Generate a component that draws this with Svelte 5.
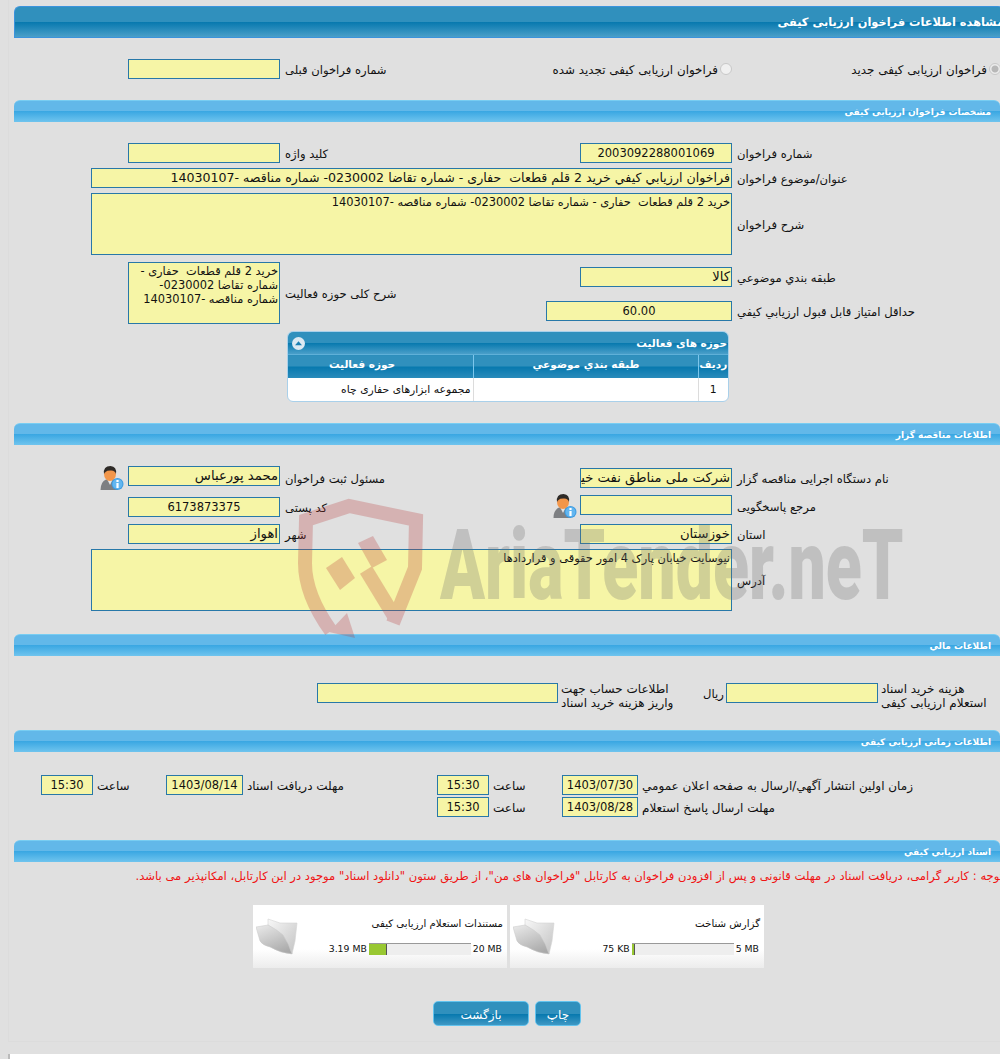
<script>
    const docs = [
        { title: "گزارش شناخت", max: "5 MB", used: "75 KB", pct: 3 },
        { title: "مستندات استعلام ارزیابی کیفی", max: "20 MB", used: "3.19 MB", pct: 18 },
    ];
</script>

{#snippet person()}
    <svg class="person" viewBox="0 0 24 24" width="24" height="24">
        <path d="M0.5 24 Q0.5 16 6 13.5 L14 13.5 Q18 16 18 24 Z" fill="#7d7f82" />
        <path d="M7 13 L10 19 L13 13 Z" fill="#e4e4e4" />
        <ellipse cx="10" cy="8" rx="6" ry="7" fill="#f2964a" />
        <path d="M4 8 Q3 0 10.5 0 Q17 0.5 16 8 Q15 4.2 11 4.4 Q7 4.2 5.8 5.8 Q4.6 6.8 4 8 Z" fill="#2e2a27" />
        <circle cx="17.5" cy="18" r="6" fill="#3d9be0" />
        <circle cx="17.5" cy="18" r="5" fill="#62b6f0" />
        <rect x="16.4" y="17" width="2.2" height="5" fill="#fff" />
        <rect x="16.4" y="14" width="2.2" height="2" fill="#fff" />
    </svg>
{/snippet}

{#snippet folder()}
    <svg class="folder" viewBox="0 0 42 38" width="42" height="38">
        <defs>
            <linearGradient id="fold" x1="0.2" y1="0" x2="0.7" y2="1">
                <stop offset="0" stop-color="#e6e6e6" />
                <stop offset="1" stop-color="#a9a9a9" />
            </linearGradient>
            <linearGradient id="sheet" x1="0" y1="0" x2="1" y2="1">
                <stop offset="0" stop-color="#f8f8f8" />
                <stop offset="1" stop-color="#c2c2c2" />
            </linearGradient>
        </defs>
        <path d="M12 1 L24 5 L41 5 L39 23 L36 36 L27 17 L12 7 Z" fill="url(#sheet)" stroke="#d4d4d4" stroke-width="0.6" />
        <path d="M0 9 L12 7 Q20 11 27 17 Q33 26 36 36 Q24 35 14 29 Q6 27 4 23 Z" fill="url(#fold)" stroke="#c8c8c8" stroke-width="0.5" />
    </svg>
{/snippet}

<div class="page">
    <div class="bar main"><span>مشاهده اطلاعات فراخوان ارزیابی کیفی</span></div>
    <div class="body b1 form">
        <label class="radio r1"><input type="radio" name="kind" checked disabled /> فراخوان ارزیابی کیفی جدید</label>
        <label class="radio r2"><input type="radio" name="kind" disabled /> فراخوان ارزیابی کیفی تجدید شده</label>
        <div class="field left"></div>
        <div class="lbl lcap">شماره فراخوان قبلی</div>
    </div>

    <div class="bar"><span>مشخصات فراخوان ارزیابی کیفی</span></div>
    <div class="body b2">
        <div class="form rows2">
            <div class="field left"></div>
            <div class="lbl lcap">كليد واژه</div>
            <div class="field mid c">2003092288001069</div>
            <div class="lbl rcap">شماره فراخوان</div>

            <div class="field full">فراخوان ارزيابي كيفي خريد 2 قلم قطعات  حفاری - شماره تقاضا 0230002- شماره مناقصه -14030107</div>
            <div class="lbl rcap">عنوان/موضوع فراخوان</div>

            <div class="field full area">خرید 2 قلم قطعات  حفاری - شماره تقاضا 0230002- شماره مناقصه -14030107</div>
            <div class="lbl rcap">شرح فراخوان</div>

            <div class="field left area scope">خرید 2 قلم قطعات  حفاری - شماره تقاضا 0230002- شماره مناقصه -14030107</div>
            <div class="lbl lcap scopecap">شرح كلی حوزه فعالیت</div>
            <div class="field mid cat">کالا</div>
            <div class="lbl rcap cat">طبقه بندي موضوعي</div>
            <div class="field wide c score">60.00</div>
            <div class="lbl rcap score">حداقل امتياز قابل قبول ارزيابي كيفي</div>
        </div>

        <div class="activity">
            <div class="cap">
                <span>حوزه های فعالیت</span>
                <svg viewBox="0 0 12 12" width="13" height="13">
                    <circle cx="6" cy="6" r="6" fill="#dce9f2" />
                    <path d="M2.8 7.6 L6 4 L9.2 7.6 Z" fill="#1a7fb2" />
                </svg>
            </div>
            <table>
                <thead>
                    <tr>
                        <th class="n">ردیف</th>
                        <th class="cls">طبقه بندي موضوعي</th>
                        <th class="act">حوزه فعالیت</th>
                    </tr>
                </thead>
                <tbody>
                    <tr>
                        <td class="n">1</td>
                        <td class="cls"></td>
                        <td>مجموعه ابزارهای حفاری چاه</td>
                    </tr>
                </tbody>
            </table>
        </div>
    </div>

    <div class="bar"><span>اطلاعات مناقصه گزار</span></div>
    <div class="body b3 form">
        <div class="iconcell i1">{@render person()}</div>
        <div class="field left">محمد پورعباس</div>
        <div class="lbl lcap">مسئول ثبت فراخوان</div>
        <div class="field mid org">شرکت ملی مناطق نفت خیز جنوب</div>
        <div class="lbl rcap">نام دستگاه اجرایی مناقصه گزار</div>

        <div class="field left c low">6173873375</div>
        <div class="lbl lcap low">کد پستی</div>
        <div class="iconcell i2">{@render person()}</div>
        <div class="field mid high"></div>
        <div class="lbl rcap">مرجع پاسخگویی</div>

        <div class="field left low">اهواز</div>
        <div class="lbl lcap low">شهر</div>
        <div class="field mid low">خوزستان</div>
        <div class="lbl rcap low">استان</div>

        <div class="field full area">نیوسایت خیابان پارک 4 امور حقوقی و قراردادها</div>
        <div class="lbl rcap">آدرس</div>
    </div>

    <div class="bar"><span>اطلاعات مالي</span></div>
    <div class="body b4">
        <div class="field"></div>
        <div class="lbl two">اطلاعات حساب جهت<br />واریز هزینه خرید اسناد</div>
        <div class="lbl rial">ریال</div>
        <div class="field"></div>
        <div class="lbl two">هزینه خرید اسناد<br />استعلام ارزیابی کیفی</div>
    </div>

    <div class="bar"><span>اطلاعات زمانی ارزیابی کیفی</span></div>
    <div class="body b5">
        <div class="field c">15:30</div>
        <div class="lbl">ساعت</div>
        <div class="field c">1403/08/14</div>
        <div class="lbl">مهلت دریافت اسناد</div>
        <div class="field c">15:30</div>
        <div class="lbl">ساعت</div>
        <div class="field c">1403/07/30</div>
        <div class="lbl">زمان اولین انتشار آگهي/ارسال به صفحه اعلان عمومي</div>

        <div class="field c second">15:30</div>
        <div class="lbl">ساعت</div>
        <div class="field c">1403/08/28</div>
        <div class="lbl">مهلت ارسال پاسخ استعلام</div>
    </div>

    <div class="bar"><span>اسناد ارزیابي كيفي</span></div>
    <div class="body b6">
        <div class="note">توجه : کاربر گرامی، دریافت اسناد در مهلت قانونی و پس از افزودن فراخوان به کارتابل "فراخوان های من"، از طریق ستون "دانلود اسناد" موجود در این کارتابل، امکانپذیر می باشد.</div>
        <div class="cards">
            {#each docs as d}
                <div class="card">
                    <div class="info">
                        <div class="ctitle">{d.title}</div>
                        <div class="usage">
                            <span>{d.max}</span>
                            <div class="track"><div class="fill" style="width: {d.pct}%"></div></div>
                            <span>{d.used}</span>
                        </div>
                    </div>
                    {@render folder()}
                </div>
            {/each}
        </div>
        <div class="actions">
            <button class="back">بازگشت</button>
            <button class="print">چاپ</button>
        </div>
    </div>
</div>
<div class="foot"></div>

<div class="watermark">
    <svg viewBox="0 0 140 145" width="140" height="145">
        <path d="M100 128 L122 73 L123 25 L56 11 L13 25 L12 68 Q12 100 38 136" fill="none" stroke="#b83a3a" stroke-width="14" />
        <path d="M36 137 L62 143 L54 118 Z" fill="#b83a3a" />
        <path d="M33 73 L49 62 L62 83 L47 95 Z" fill="#b83a3a" />
        <path d="M65 48 L80 41 L94 65 L79 73 Z" fill="#b83a3a" />
        <path d="M73 75 L101 121" stroke="#b83a3a" stroke-width="14" fill="none" />
    </svg>
    <span>AriaTender.neT</span>
</div>

<style>
    :global(html),
    :global(body) {
        margin: 0;
        height: 100%;
        overflow: hidden;
        background: #e0e0e0;
    }

    :global(body) {
        font-family: "DejaVu Sans", sans-serif;
        font-size: 11.6px;
        color: #111;
    }

    .page {
        margin-left: 8px;
        padding: 6px 0 15px 5px;
        border-left: 1px solid #dcdcdc;
        border-bottom: 1px solid #dcdcdc;
    }

    .foot {
        margin: 12px 0 0 8px;
        height: 30px;
        background: #fff;
        border-left: 2px solid #bbb;
    }

    /* section bars */
    .bar {
        height: 22px;
        box-sizing: border-box;
        direction: rtl;
        display: flex;
        align-items: center;
        padding-right: 9px;
        color: #fff;
        font-weight: bold;
        font-size: 9px;
        border-top: 1px solid #78cdf2;
        border-radius: 6px 6px 0 0;
        background: linear-gradient(#62b8e9 0, #62b8e9 10px, #38a6e2 10px, #6fc4ee 100%);
    }

    .bar.main {
        height: 32px;
        padding-right: 0;
        margin-right: -4px;
        font-size: 11.4px;
        border-top-color: #3b93dc;
        border-left: 1px solid #3b93dc;
        border-bottom: 1px solid #3b93dc;
        background: linear-gradient(#3090bd 0, #3090bd 15px, #0678ae 15px, #4a9fc9 100%);
    }

    .body {
        direction: ltr;
    }

    /* shared form grid: 91 / 128 / 280 / 546 / 580 / 732 */
    .form {
        display: grid;
        grid-template-columns: 77px 37px 152px 266px 34px 152px 268px;
        row-gap: 5px;
    }

    .field {
        box-sizing: border-box;
        height: 20px;
        line-height: 18px;
        padding: 0 1px;
        direction: rtl;
        text-align: right;
        white-space: pre;
        overflow: hidden;
        font-size: 13.2px;
        background: #f6f5a6;
        border: 1px solid #2878a8;
    }

    .field.c {
        text-align: center;
        font-size: 11.5px;
    }

    .field.full {
        font-size: 12.6px;
    }

    .field.area {
        height: 62px;
        padding-top: 1px;
        white-space: pre-wrap;
        line-height: 14px;
        font-size: 11.4px;
    }

    .left {
        grid-column: 3;
    }

    .mid {
        grid-column: 6;
    }

    .wide {
        grid-column: 5 / 7;
    }

    .full {
        grid-column: 2 / 7;
    }

    .lbl {
        direction: rtl;
        text-align: left;
        white-space: nowrap;
        padding: 2px 0 0 5px;
        align-self: center;
    }

    .lcap {
        grid-column: 4;
    }

    .rcap {
        grid-column: 7;
    }

    .radio {
        display: flex;
        align-items: center;
        gap: 2px;
        direction: rtl;
        white-space: nowrap;
        grid-row: 1;
        font-size: 11.9px;
        padding-top: 2px;
    }

    .r1 {
        grid-column: 7;
        justify-self: end;
        margin-right: -1px;
    }

    .r2 {
        grid-column: 4 / 7;
        justify-self: end;
    }

    .radio input {
        appearance: none;
        width: 12px;
        height: 12px;
        margin: -3px 0 0;
        border-radius: 50%;
        border: 1px solid #c8c8c8;
        background: #f0f0f0;
    }

    .radio input:checked {
        background: radial-gradient(circle, #b8b8b8 0 3px, #ececec 4px);
    }

    .b1 {
        padding: 21px 0;
    }

    .b1 .field,
    .b1 .lbl {
        grid-row: 1;
    }

    .b2 {
        padding: 21px 0;
    }

    .rows2 {
        grid-template-rows: 20px 20px 62px 27px 32px;
    }

    .scope {
        grid-row: 4 / 6;
        margin-top: 2px;
    }

    .scopecap {
        grid-row: 4 / 6;
        margin-top: 2px;
    }

    .field.cat,
    .lbl.cat {
        grid-row: 4;
        align-self: end;
    }

    .lbl.cat {
        line-height: 20px;
        padding-top: 0;
        margin-bottom: -1px;
    }

    .field.score,
    .lbl.score {
        grid-row: 5;
        margin-top: 9px;
        align-self: start;
    }

    .lbl.score {
        line-height: 20px;
        padding-top: 0;
        margin-top: 10px;
    }

    .activity {
        width: 442px;
        height: 71px;
        box-sizing: border-box;
        margin: 7px 0 0 273px;
        direction: rtl;
        background: #fff;
        border: 1px solid #a9d0ea;
        border-radius: 6px;
        overflow: hidden;
    }

    .cap {
        height: 22px;
        display: flex;
        align-items: center;
        justify-content: space-between;
        padding: 0 1px 0 4px;
        color: #fff;
        font-weight: bold;
        font-size: 10.5px;
        background: linear-gradient(#3090bd 0, #3090bd 11px, #0678ae 11px, #4a9fc9 100%);
    }

    table {
        width: 100%;
        border-collapse: collapse;
        table-layout: fixed;
    }

    th {
        height: 23px;
        padding: 0 0 5px;
        box-sizing: border-box;
        color: #fff;
        font-size: 10.5px;
        background: linear-gradient(#3090bd 0, #3090bd 11px, #0678ae 11px, #2b8cbb 100%);
        border-right: 1px solid #7cc6ec;
        border-top: 1px solid #5fb0d8;
    }

    th:first-child,
    td:first-child {
        border-right: none;
    }

    th.cls {
        text-align: left;
        padding-left: 59px;
    }

    th.act {
        text-align: left;
        padding-left: 41px;
    }

    td {
        height: 23px;
        padding: 0 2px;
        font-size: 10.8px;
        border-right: 1px solid #dcdcdc;
    }

    .n {
        width: 30px;
        text-align: center;
    }

    .cls {
        width: 225px;
    }

    .b3 {
        padding: 21px 0 23px;
        grid-template-rows: 24px 22px 22px 62px;
    }

    .b3 .field.left:not(.low),
    .b3 .field.high {
        align-self: start;
    }

    .field.org {
        margin-top: 2px;
        height: 20px;
    }

    .low {
        align-self: end;
    }

    .lbl.low {
        margin-bottom: 2px;
    }

    .iconcell {
        display: flex;
        justify-content: flex-end;
    }

    .i1 {
        grid-column: 2;
        padding-right: 4px;
    }

    .i2 {
        grid-column: 5;
        padding-right: 3px;
        margin-top: -1px;
    }

    .person {
        display: block;
    }

    .b4 {
        display: grid;
        grid-template-columns: 241px 145px 23px 152px 122px;
        grid-template-rows: 20px;
        margin-left: 303px;
        padding: 27px 0;
        align-items: center;
    }

    .lbl.two {
        line-height: 14px;
        padding-left: 3px;
        margin-top: 3px;
        font-size: 12px;
    }

    .lbl.rial {
        padding-left: 0;
    }

    .b5 {
        display: grid;
        grid-template-columns: 52px 73px 77px 194px 52px 73px 76px 362px;
        row-gap: 2px;
        padding: 23px 0 23px 27px;
    }

    .b5 .lbl {
        padding-left: 4px;
        font-size: 12px;
    }

    .second {
        grid-column: 5;
    }

    .note {
        direction: rtl;
        margin-right: -3px;
        height: 36px;
        padding-top: 7px;
        white-space: nowrap;
        color: #f01414;
        font-size: 11.6px;
    }

    .cards {
        direction: rtl;
        display: flex;
        gap: 3px;
        width: 511px;
        margin-left: 239px;
    }

    .card {
        width: 254px;
        height: 63px;
        box-sizing: border-box;
        display: flex;
        padding: 0 3px;
        background: linear-gradient(#fff 0, #fff 70%, #ececec 100%);
    }

    .info {
        flex: 1;
        min-width: 0;
    }

    .ctitle {
        margin-top: 13px;
        height: 24px;
        font-size: 10.2px;
        text-align: right;
        padding-right: 1px;
    }

    .usage {
        display: flex;
        align-items: center;
        gap: 2px;
        direction: rtl;
        font-size: 9.3px;
        height: 13px;
        justify-content: flex-start;
        padding-right: 2px;
    }

    .usage span {
        direction: ltr;
        white-space: nowrap;
    }

    .track {
        width: 102px;
        height: 12px;
        box-sizing: border-box;
        direction: ltr;
        background: #eee;
        border-top: 1px solid #999;
    }

    .fill {
        height: 100%;
        box-sizing: border-box;
        background: #99c832;
        border-right: 1px solid #555;
    }

    .folder {
        flex: none;
        align-self: flex-start;
        margin-top: 13px;
    }

    .actions {
        display: flex;
        gap: 6px;
        margin: 33px 0 0 419px;
    }

    button {
        height: 25px;
        box-sizing: border-box;
        padding: 3px 0 0;
        color: #fff;
        font-family: inherit;
        font-size: 12px;
        border: 1px solid #62c3ee;
        border-radius: 5px;
        background: linear-gradient(#3090bd 0, #3090bd 12px, #0678ae 12px, #3f98c4 100%);
    }

    .back {
        width: 96px;
    }

    .print {
        width: 46px;
    }

    /* logo overlay */
    .watermark {
        position: absolute;
        left: 293px;
        top: 495px;
        width: 620px;
        height: 145px;
        pointer-events: none;
    }

    .watermark svg {
        position: absolute;
        left: 0;
        top: 0;
        opacity: 0.27;
    }

    .watermark span {
        position: absolute;
        left: 147px;
        top: 16px;
        font-family: Roboto, sans-serif;
        font-weight: 900;
        font-size: 98px;
        line-height: 110px;
        white-space: nowrap;
        color: rgba(110, 110, 110, 0.28);
        transform: scaleX(0.675);
        transform-origin: left top;
    }
</style>
